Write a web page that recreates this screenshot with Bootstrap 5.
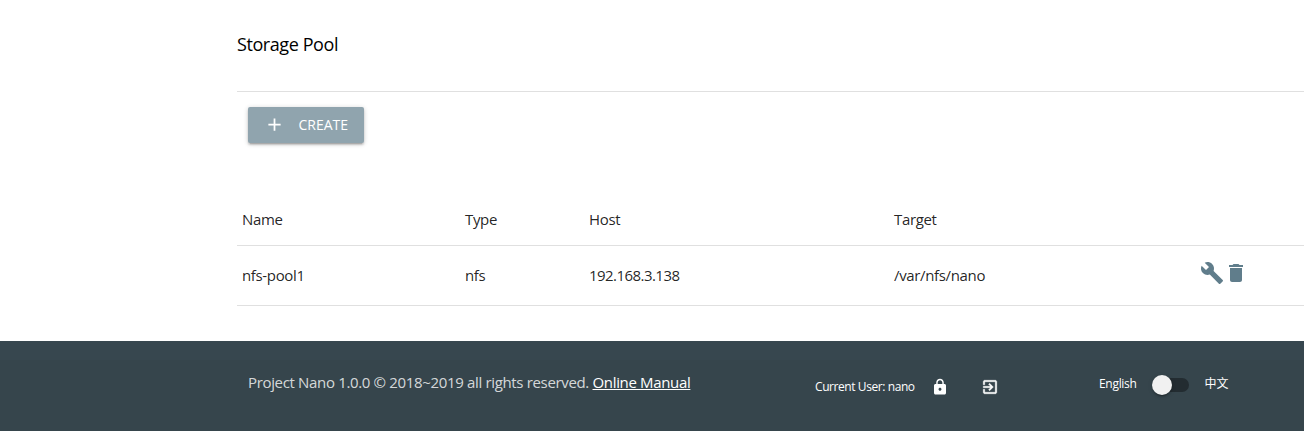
<!DOCTYPE html>
<html lang="en">
<head>
<meta charset="utf-8">
<meta name="viewport" content="width=device-width, initial-scale=1">
<title>Storage Pool</title>
<link href="https://cdn.jsdelivr.net/npm/bootstrap@5.3.0/dist/css/bootstrap.min.css" rel="stylesheet">
<style>
body{font-family:"Open Sans","Noto Sans CJK SC",sans-serif;font-size:15px;line-height:22.5px;color:rgba(0,0,0,.87);overflow:hidden}
svg{display:block;fill:currentColor;flex:none}
.pool-main{margin-left:237px;height:341px}
.pool-title{height:92px;padding-top:33px;font-size:18px;letter-spacing:-.42px;color:#000;border-bottom:1px solid #e0e0e0}
.btn-create{width:116px;height:36px;margin:15px 0 0 11px;padding:0 0 0 16px;border-radius:2px;background:#90a4ae;color:#fff;font-size:14px;gap:13.5px;box-shadow:0 2px 2px 0 rgba(0,0,0,.14),0 3px 1px -2px rgba(0,0,0,.12),0 1px 5px 0 rgba(0,0,0,.2)}
.btn-create span{padding-bottom:2px}
.btn-create svg{margin-bottom:1px}
.pool-table{table-layout:fixed;width:1067px;margin:50px 0 0}
.pool-table>:not(caption)>*>*{padding:0 5px;font-weight:400;letter-spacing:-.35px;color:rgba(0,0,0,.87);border-bottom:1px solid #e0e0e0;vertical-align:middle}
.pool-table thead tr{height:52px}
.pool-table tbody tr{height:60px}
.pool-table .pool-ip{letter-spacing:-.55px}
.pool-actions{color:#607d8b;margin:-5px 0 0 -1px}
.page-foot{height:90px;background:#37474f;padding-top:19px}
.foot-bar{height:71px;background:rgba(51,51,51,.08);padding-left:248px;color:rgba(255,255,255,.8)}
.foot-copy{width:567px;padding-top:11px;letter-spacing:-.34px}
.foot-user{width:284px;padding-top:16px;font-size:12px;color:#fff}
.foot-user span{width:116px;letter-spacing:-.42px}
.foot-user svg+svg{margin-left:32px;stroke:currentColor;stroke-width:.5}
.foot-lang{padding-top:13px;font-size:12px;color:#fff}
.foot-lang .lang-en{letter-spacing:-.3px}
.switch-track{width:36px;height:14px;border-radius:15px;background:#232c31;margin:2px 16px 0 16px}
.switch-knob{display:block;width:20px;height:20px;border-radius:50%;background:#f1f1f1;margin:-3px 0 0 -1px;box-shadow:0 3px 1px -2px rgba(0,0,0,.2),0 2px 2px rgba(0,0,0,.14),0 1px 5px rgba(0,0,0,.12)}
</style>
</head>
<body>
<main class="pool-main">
  <div class="pool-title">Storage Pool</div>
  <button class="btn btn-create d-flex align-items-center border-0">
    <svg width="21" height="21" viewBox="0 0 24 24"><path d="M19 13h-6v6h-2v-6H5v-2h6V5h2v6h6v2z"/></svg><span>CREATE</span>
  </button>
  <table class="table pool-table">
    <colgroup><col style="width:223px"><col style="width:124px"><col style="width:305px"><col style="width:307px"><col></colgroup>
    <thead><tr><th>Name</th><th>Type</th><th>Host</th><th>Target</th><th></th></tr></thead>
    <tbody><tr><td>nfs-pool1</td><td>nfs</td><td class="pool-ip">192.168.3.138</td><td>/var/nfs/nano</td>
      <td><div class="d-flex pool-actions">
        <svg width="24" height="24" viewBox="0 0 24 24"><path d="M22.7 19l-9.1-9.1c.9-2.3.4-5-1.5-6.9-2-2-5-2.4-7.4-1.3L9 6 6 9 1.6 4.7C.4 7.1.9 10.1 2.9 12.1c1.9 1.9 4.6 2.4 6.9 1.5l9.1 9.1c.4.4 1 .4 1.4 0l2.3-2.3c.5-.4.5-1.1.1-1.4z"/></svg>
        <svg width="24" height="24" viewBox="0 0 24 24"><path d="M6 19c0 1.1.9 2 2 2h8c1.1 0 2-.9 2-2V7H6v12zM19 4h-3.5l-1-1h-5l-1 1H5v2h14V4z"/></svg>
      </div></td></tr></tbody>
  </table>
</main>
<footer class="page-foot">
  <div class="foot-bar d-flex align-items-start">
    <div class="foot-copy">Project Nano 1.0.0 © 2018~2019 all rights reserved. <a href="#" class="text-white">Online Manual</a></div>
    <div class="foot-user d-flex align-items-center">
      <span>Current User: nano</span>
      <svg width="18" height="18" viewBox="0 0 24 24"><path d="M18 8h-1V6c0-2.76-2.24-5-5-5S7 3.24 7 6v2H6c-1.1 0-2 .9-2 2v10c0 1.1.9 2 2 2h12c1.1 0 2-.9 2-2V10c0-1.1-.9-2-2-2zm-6 9c-1.1 0-2-.9-2-2s.9-2 2-2 2 .9 2 2-.9 2-2 2zm3.1-9H8.9V6c0-1.71 1.39-3.1 3.1-3.1 1.71 0 3.1 1.39 3.1 3.1v2z"/></svg>
      <svg width="18" height="18" viewBox="0 0 24 24"><path d="M10.09 15.59L11.5 17l5-5-5-5-1.41 1.41L12.67 11H3v2h9.67l-2.58 2.59zM19 3H5c-1.11 0-2 .9-2 2v4h2V5h14v14H5v-4H3v4c0 1.1.89 2 2 2h14c1.1 0 2-.9 2-2V5c0-1.1-.9-2-2-2z"/></svg>
    </div>
    <div class="foot-lang d-flex align-items-center"><span class="lang-en">English</span><span class="switch-track"><span class="switch-knob"></span></span><span>中文</span></div>
  </div>
</footer>
<script src="https://cdn.jsdelivr.net/npm/bootstrap@5.3.0/dist/js/bootstrap.bundle.min.js"></script>
</body>
</html>
